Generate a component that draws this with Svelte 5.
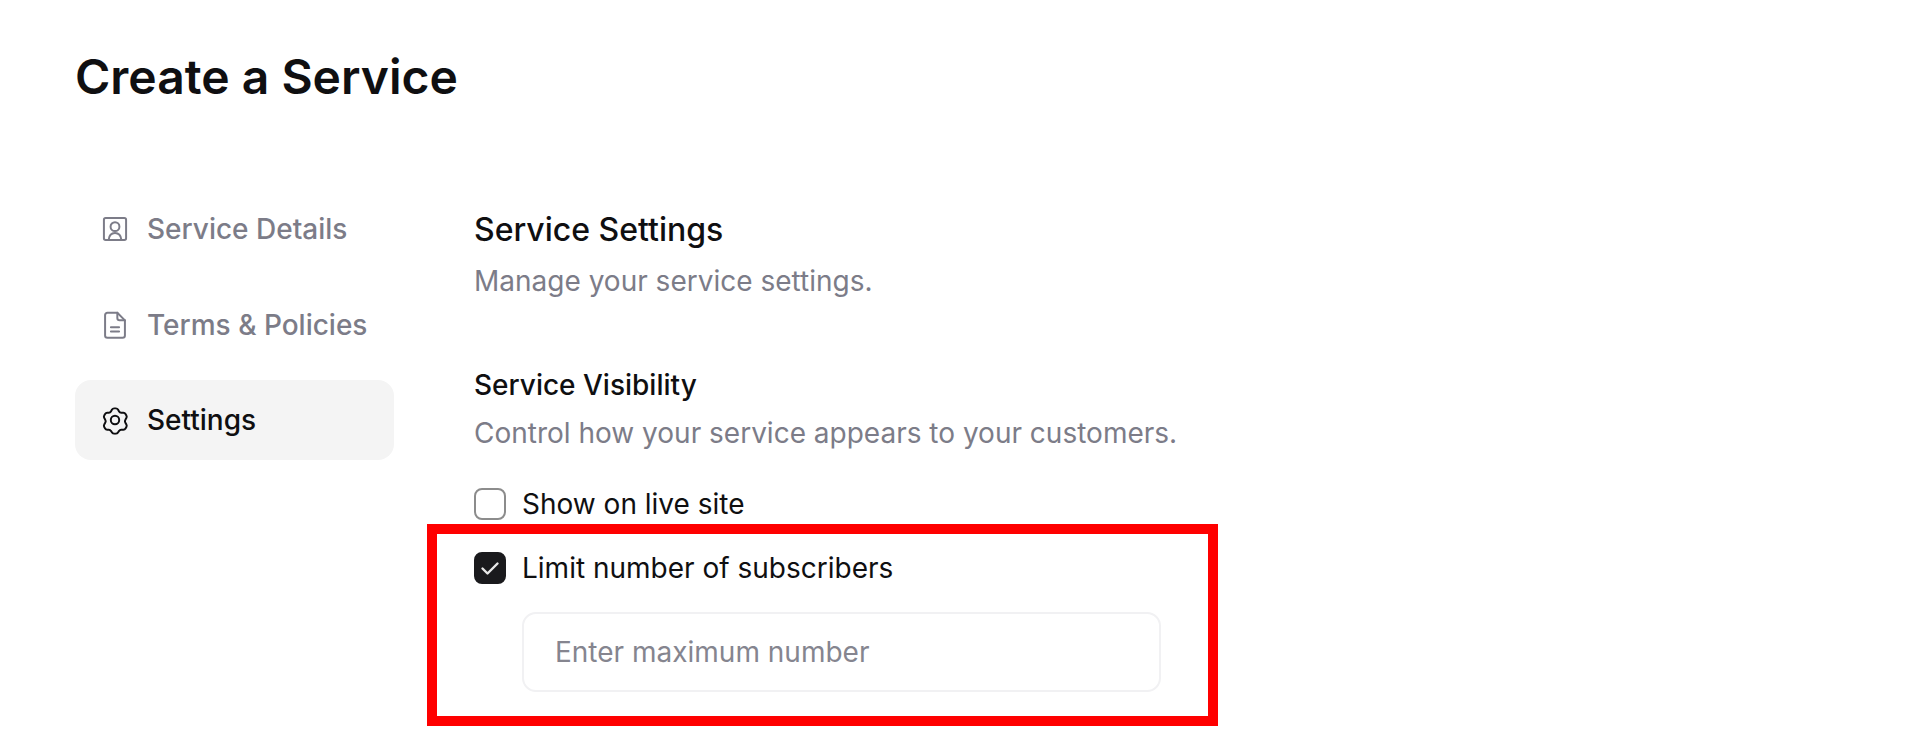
<script>
  let limit = $state(true);
  let live = $state(false);
</script>

<div class="page">
  <h1>Create a Service</h1>
  <div class="layout">
    <nav class="side">
      <div class="item">
        <svg viewBox="0 0 24 24" class="ico"><rect x="2.500" y="2.500" width="19" height="19" rx="1.500"/><circle cx="12" cy="10" r="3.800"/><path d="M6.500 21.500c.4-3.800 2.600-6 5.500-6s5.100 2.200 5.500 6"/></svg>
        <span>Service Details</span>
      </div>
      <div class="item">
        <svg viewBox="0 0 24 24" class="ico"><path d="M14 1.500H5.500a2 2 0 0 0-2 2v17.500a2 2 0 0 0 2 2h13a2 2 0 0 0 2-2V8z"/><path d="M14 1.500v4.500a2 2 0 0 0 2 2h4.500"/><path d="M8.500 14h7M8.500 17.500h7"/></svg>
        <span>Terms &amp; Policies</span>
      </div>
      <div class="item active">
        <svg viewBox="0 0 24 24" class="ico gear"><circle cx="12" cy="12" r="3.400"/><path d="M9.600 3.600a2 2 0 0 1 1.700-1h1.400a2 2 0 0 1 1.700 1l.9 1.500a2 2 0 0 0 1.700 1h1.800a2 2 0 0 1 1.700 1l.7 1.200a2 2 0 0 1 0 2l-.9 1.700a2 2 0 0 0 0 2l.9 1.600a2 2 0 0 1 0 2l-.7 1.200a2 2 0 0 1-1.700 1h-1.800a2 2 0 0 0-1.700 1l-.9 1.300a2 2 0 0 1-1.700 1h-1.400a2 2 0 0 1-1.700-1l-.9-1.300a2 2 0 0 0-1.700-1H5.700a2 2 0 0 1-1.700-1l-.7-1.200a2 2 0 0 1 0-2l.9-1.600a2 2 0 0 0 0-2l-.9-1.700a2 2 0 0 1 0-2L4 7.100a2 2 0 0 1 1.700-1h1.100a2 2 0 0 0 1.900-1z"/></svg>
        <span>Settings</span>
      </div>
    </nav>
    <main class="content">
      <h2>Service Settings</h2>
      <p class="sub">Manage your service settings.</p>
      <h3>Service Visibility</h3>
      <p class="sub tight">Control how your service appears to your customers.</p>
      <label class="check first">
        <input type="checkbox" bind:checked={live} />
        <span>Show on live site</span>
      </label>
      <label class="check">
        <input type="checkbox" bind:checked={limit} />
        <span>Limit number of subscribers</span>
      </label>
      <input class="num" type="text" placeholder="Enter maximum number" />
    </main>
  </div>
  <div class="highlight"></div>
</div>

<style>
  :global(body) { margin: 0; background: #fff; }
  .page {
    position: relative;
    width: 1912px;
    height: 742px;
    overflow: hidden;
    font-family: Inter, "Liberation Sans", sans-serif;
    color: #0f0f11;
    padding: 48px 0 0 75px;
    box-sizing: border-box;
  }
  h1 { margin: 0; font-size: 48px; line-height: 58px; font-weight: 600; }
  .layout { display: flex; margin-top: 83px; }
  .side { width: 319px; display: flex; flex-direction: column; gap: 15.5px; }
  .item {
    height: 80px;
    box-sizing: border-box;
    padding: 0 26px;
    display: flex;
    align-items: center;
    gap: 18px;
    border-radius: 16px;
    font-size: 28px;
    font-weight: 500;
    color: #7c7c88;
  }
  .item.active { background: #f4f4f4; color: #0f0f11; }
  .ico { width: 28px; height: 28px; fill: none; stroke: currentColor; stroke-width: 1.700; stroke-linecap: round; stroke-linejoin: round; flex: none; }
  .ico.gear { transform: scale(1.06); stroke-width: 1.600; }
  .content { margin-left: 80px; display: flex; flex-direction: column; align-items: flex-start; padding-top: 21px; }
  h2 { margin: 0; font-size: 32px; line-height: 40px; font-weight: 500; }
  h3 { margin: 68px 0 0; font-size: 28px; line-height: 36px; font-weight: 500; }
  .sub { margin: 13px 0 0; font-size: 28px; line-height: 36px; color: #7c7c88; }
  .sub.tight { margin-top: 12px; }
  .check { display: flex; align-items: center; gap: 16px; font-size: 28px; line-height: 34px; cursor: pointer; }
  .check.first { margin-top: 36px; }
  .check + .check { margin-top: 30px; }
  .check input {
    appearance: none;
    width: 32px;
    height: 32px;
    margin: 0;
    box-sizing: border-box;
    border: 2px solid #8c8c8c;
    border-radius: 8px;
    background: #fff;
  }
  .check input:checked {
    border-color: #1a1a1d;
    background: #1a1a1d url("data:image/svg+xml,%3Csvg xmlns='http://www.w3.org/2000/svg' viewBox='0 0 32 32'%3E%3Cpath d='M8.500 16.500l5 5 10-10' fill='none' stroke='%23e8e8e8' stroke-width='2.400' stroke-linecap='round' stroke-linejoin='round'/%3E%3C/svg%3E") center/100% no-repeat;
    background-origin: border-box;
  }
  .num {
    margin: 27px 0 0 48px;
    width: 639px;
    height: 80px;
    box-sizing: border-box;
    border: 2px solid #f1f1f3;
    border-radius: 14px;
    padding: 0 31px;
    font: inherit;
    font-size: 28px;
    background: #fff;
    outline: none;
  }
  .num::placeholder { color: #85858f; opacity: 1; }
  .highlight {
    position: absolute;
    left: 427px;
    top: 524px;
    width: 791px;
    height: 202px;
    box-sizing: border-box;
    border: 10px solid #f00;
    pointer-events: none;
  }
</style>
